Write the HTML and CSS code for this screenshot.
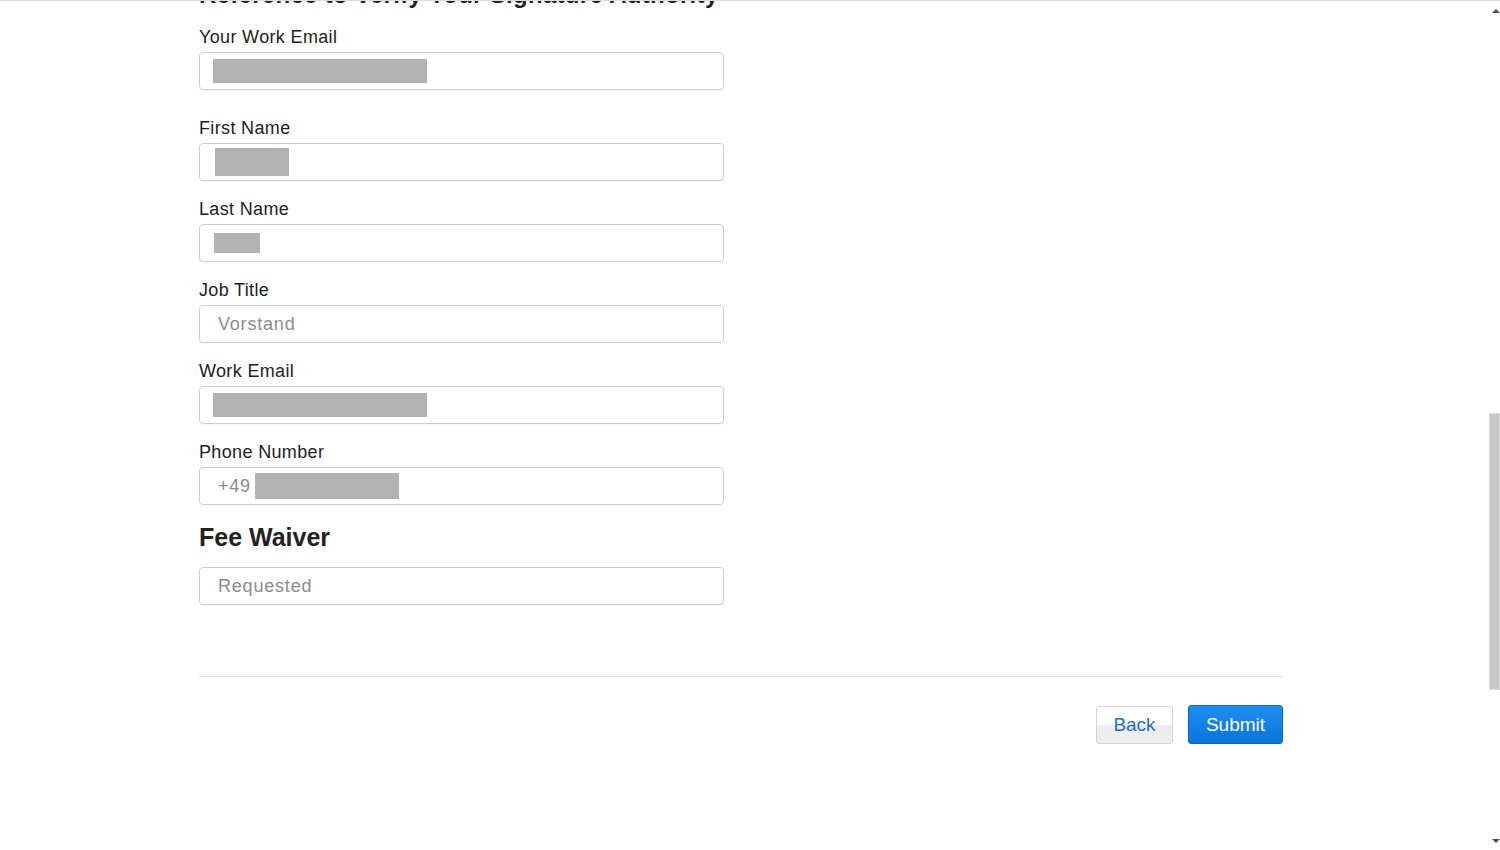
FILE: index.html
```html
<!DOCTYPE html>
<html lang="en">

<head>
  <meta charset="UTF-8">
  <meta name="viewport" content="width=device-width, initial-scale=1.0">
  <title>Signature Authority</title>
  <link rel="stylesheet" href="styles.css">
</head>

<body>

  <div class="top-line"></div>

  <div class="page">
    <h2 class="section-title">Reference to Verify Your Signature Authority</h2>

    <div class="field first">
      <label>Your Work Email</label>
      <div class="input"><span class="redact" style="width: 214px; height: 24px; margin-left: -5px;"></span></div>
    </div>

    <div class="field">
      <label>First Name</label>
      <div class="input"><span class="redact" style="width: 74px; height: 28px; margin-left: -3px;"></span></div>
    </div>

    <div class="field">
      <label>Last Name</label>
      <div class="input"><span class="redact" style="width: 46px; height: 20px; margin-left: -4px;"></span></div>
    </div>

    <div class="field">
      <label>Job Title</label>
      <div class="input"><span class="value">Vorstand</span></div>
    </div>

    <div class="field">
      <label>Work Email</label>
      <div class="input"><span class="redact" style="width: 214px; height: 24px; margin-left: -5px;"></span></div>
    </div>

    <div class="field">
      <label>Phone Number</label>
      <div class="input"><span class="value">+49</span><span class="redact" style="width: 144px; height: 26px; margin-left: 4px;"></span></div>
    </div>

    <h3 class="sub-title">Fee Waiver</h3>
    <div class="input"><span class="value">Requested</span></div>

    <div class="actions">
      <button class="btn back">Back</button>
      <button class="btn submit">Submit</button>
    </div>
  </div>

  <!-- scrollbar of the window -->
  <div class="scrollbar">
    <span class="arrow up"></span>
    <span class="thumb"></span>
    <span class="arrow down"></span>
  </div>

</body>

</html>
```

FILE: styles.css
```css
body {
  margin: 0;
  font-family: "Liberation Sans", Arial, sans-serif;
  color: #222;
  background: #fff;
  overflow: hidden;
}

.top-line {
  position: fixed;
  top: 0;
  left: 0;
  right: 0;
  height: 1px;
  background-color: #dcdce6;
  z-index: 5;
}

.page {
  width: 1084px;
  margin-left: 199px;
  margin-top: -19px;
}

.section-title {
  margin: 0;
  font-size: 24px;
  line-height: 28px;
  font-weight: bold;
  letter-spacing: 0.3px;
  color: #222;
  height: 45px;
}

.field {
  display: flex;
  flex-direction: column;
  gap: 4px;
  margin-bottom: 17px;
}

.field.first {
  margin-bottom: 27px;
}

.field label {
  font-size: 18px;
  line-height: 22px;
  letter-spacing: 0.35px;
  color: #222;
}

.input {
  box-sizing: border-box;
  width: 525px;
  height: 38px;
  border: 1px solid #cfcfcf;
  border-radius: 4px;
  display: flex;
  align-items: center;
  padding-left: 18px;
  font-size: 18px;
  color: #8c8c8c;
  box-shadow: 0 1px 1px rgba(0, 0, 0, 0.04);
}

.redact {
  display: inline-block;
  background-color: #b3b3b3;
}

.value {
  letter-spacing: 0.8px;
}

.sub-title {
  margin: 0;
  padding: 0 0 15px;
  font-size: 25px;
  line-height: 30px;
  font-weight: bold;
  color: #222;
}

.actions {
  margin-top: 71px;
  border-top: 1px solid #e2e2e2;
  padding-top: 28px;
  display: flex;
  justify-content: flex-end;
  gap: 15px;
}

.btn {
  box-sizing: border-box;
  height: 38px;
  font-family: "Liberation Sans", Arial, sans-serif;
  font-size: 19px;
  border-radius: 3px;
  padding: 0 16px;
  cursor: pointer;
}

.btn.back {
  width: 77px;
  color: #1f6fc6;
  background: linear-gradient(#ffffff 50%, #eeeeee 50%);
  border: 1px solid #d4d4d4;
  margin-top: 1px;
}

.btn.submit {
  width: 95px;
  height: 39px;
  color: #fff;
  background: linear-gradient(#1e8ef0, #0a74dc);
  border: 1px solid #0b67c4;
}

.scrollbar {
  position: fixed;
  top: 0;
  right: 0;
  width: 11px;
  height: 850px;
}

.scrollbar .thumb {
  position: absolute;
  top: 413px;
  left: 0;
  width: 11px;
  height: 277px;
  box-sizing: border-box;
  background-color: #c8c8c8;
  border: 1px solid #dadada;
}

.scrollbar .arrow {
  position: absolute;
  left: 3px;
  width: 0;
  height: 0;
  border-left: 4px solid transparent;
  border-right: 4px solid transparent;
}

.scrollbar .arrow.up {
  top: 9px;
  border-bottom: 4px solid #505050;
}

.scrollbar .arrow.down {
  top: 839px;
  border-top: 4px solid #505050;
}
```
